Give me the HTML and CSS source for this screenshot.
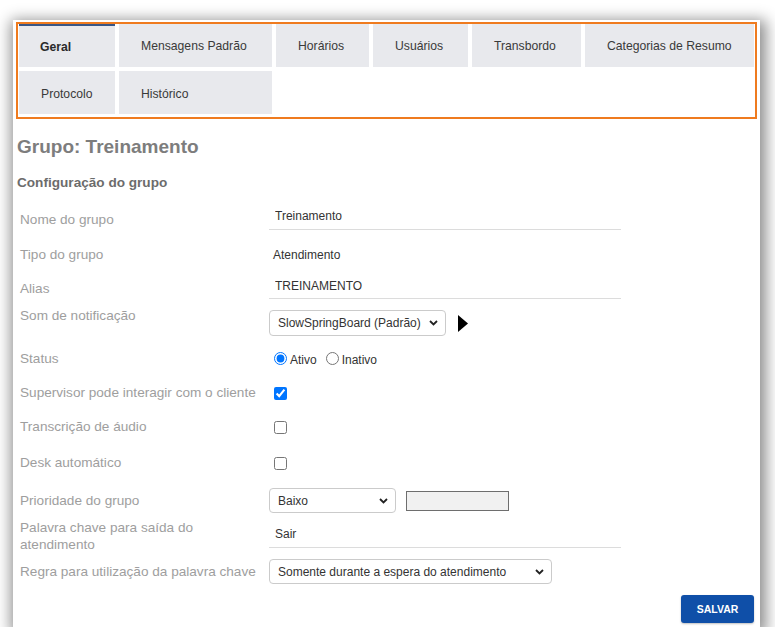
FILE: index.html
```html
<!DOCTYPE html>
<html lang="pt-BR">
<head>
<meta charset="utf-8">
<title>Grupo: Treinamento</title>
<link rel="stylesheet" href="styles.css">
</head>
<body>
<div class="card">
  <div class="tabs-frame">
    <div class="tabs">
      <div class="tab tab-active">Geral</div>
      <div class="tab">Mensagens Padrão</div>
      <div class="tab">Horários</div>
      <div class="tab">Usuários</div>
      <div class="tab">Transbordo</div>
      <div class="tab">Categorias de Resumo</div>
      <div class="tab tab-second">Protocolo</div>
      <div class="tab tab-second">Histórico</div>
    </div>
  </div>

  <div class="content">
    <h1 class="title">Grupo: Treinamento</h1>
    <h2 class="subtitle">Configuração do grupo</h2>

    <div class="form">
      <div class="label">Nome do grupo</div>
      <div class="field field-top field-first"><input class="text-input" type="text" value="Treinamento"></div>

      <div class="label">Tipo do grupo</div>
      <div class="field"><span class="static-value">Atendimento</span></div>

      <div class="label">Alias</div>
      <div class="field field-top"><input class="text-input text-input-short" type="text" value="TREINAMENTO"></div>

      <div class="label label-top">Som de notificação</div>
      <div class="field">
        <div class="select select-sound"><span>SlowSpringBoard (Padrão)</span>
          <svg class="chevron" width="9" height="6" viewBox="0 0 9 6"><path d="M1 1l3.5 3.5L8 1" fill="none" stroke="#222" stroke-width="1.8"/></svg>
        </div>
        <svg class="play" width="10" height="17" viewBox="0 0 10 17"><path d="M0 0L10 8.5L0 17Z" fill="#000"/></svg>
      </div>

      <div class="label">Status</div>
      <div class="field">
        <label class="radio"><input type="radio" name="status" checked><span class="radio-text">Ativo</span></label>
        <label class="radio"><input type="radio" name="status"><span class="radio-text">Inativo</span></label>
      </div>

      <div class="label">Supervisor pode interagir com o cliente</div>
      <div class="field"><input class="check" type="checkbox" checked></div>

      <div class="label">Transcrição de áudio</div>
      <div class="field"><input class="check" type="checkbox"></div>

      <div class="label">Desk automático</div>
      <div class="field"><input class="check" type="checkbox"></div>

      <div class="label">Prioridade do grupo</div>
      <div class="field">
        <div class="select select-priority"><span>Baixo</span>
          <svg class="chevron" width="9" height="6" viewBox="0 0 9 6"><path d="M1 1l3.5 3.5L8 1" fill="none" stroke="#222" stroke-width="1.8"/></svg>
        </div>
        <div class="priority-box"></div>
      </div>

      <div class="label label-wrap">Palavra chave para saída do atendimento</div>
      <div class="field field-top"><input class="text-input" type="text" value="Sair"></div>

      <div class="label">Regra para utilização da palavra chave</div>
      <div class="field">
        <div class="select select-rule"><span>Somente durante a espera do atendimento</span>
          <svg class="chevron" width="9" height="6" viewBox="0 0 9 6"><path d="M1 1l3.5 3.5L8 1" fill="none" stroke="#222" stroke-width="1.8"/></svg>
        </div>
      </div>
    </div>

    <div class="actions">
      <button class="btn-save" type="button">SALVAR</button>
    </div>
  </div>
</div>
</body>
</html>
```

FILE: styles.css
```css
* {
  box-sizing: border-box;
}

html, body {
  margin: 0;
  padding: 0;
  background: #ffffff;
}

body {
  font-family: "Liberation Sans", Arial, sans-serif;
  color: #333333;
}

.card {
  margin: 20px 0 0 13px;
  width: 747px;
  background: #ffffff;
  box-shadow: 2px 4px 14px 4px rgba(0, 0, 0, 0.45);
  padding: 2px 0 4px 0;
}

.tabs-frame {
  margin: 0 3px;
  border: 2px solid #ef7b1f;
  padding: 0 1px 3px 1px;
}

.tabs {
  display: grid;
  grid-template-columns: 96px 153px 93px 95px 109px 169px;
  grid-template-rows: 43px 43px;
  gap: 4px;
}

.tab {
  background: #e8e9ed;
  display: flex;
  align-items: center;
  padding-left: 22px;
  padding-top: 1px;
  font-size: 12.2px;
  color: #3a3a3a;
  white-space: nowrap;
}

.tab-second {
  padding-top: 3px;
}

.tab-active {
  border-top: 2px solid #3a5685;
  font-weight: bold;
  color: #2a2a2a;
  padding-left: 21px;
  padding-top: 0;
}

.content {
  padding: 0 6px 0 4px;
}

.title {
  margin: 17px 0 0 0;
  font-size: 19px;
  line-height: 22px;
  font-weight: bold;
  color: #7d7d7d;
}

.subtitle {
  margin: 17px 0 0 0;
  font-size: 13.6px;
  line-height: 16px;
  font-weight: bold;
  color: #6c6c6c;
}

.form {
  margin: 11px 0 0 3px;
  display: grid;
  grid-template-columns: 249px 1fr;
  grid-template-rows: 35px 35px 33px 36px 35px 34px 34px 38px 37px 34px 37px;
}

.label {
  align-self: center;
  font-size: 13.6px;
  line-height: 16px;
  color: #9e9e9e;
}

.label-top {
  align-self: start;
  margin-top: 3px;
}

.label-wrap {
  line-height: 17px;
}

.field {
  display: flex;
  align-items: center;
  font-size: 12px;
  color: #333333;
}

.field-top {
  align-items: flex-start;
  padding-top: 1px;
}

.field-first {
  padding-top: 0;
}

.text-input {
  width: 352px;
  height: 28px;
  border: none;
  border-bottom: 1px solid #dcdcdc;
  padding: 0 6px;
  margin: 0;
  font-family: "Liberation Sans", Arial, sans-serif;
  font-size: 12px;
  color: #333333;
  background: transparent;
  outline: none;
}

.text-input-short {
  height: 26px;
}

.static-value {
  padding-left: 4px;
}

.select {
  display: flex;
  align-items: center;
  justify-content: space-between;
  height: 26px;
  border: 1px solid #cbcbcb;
  border-radius: 4px;
  padding: 0 7px 0 8px;
  font-size: 12px;
  color: #333333;
  background: #ffffff;
  white-space: nowrap;
}

.select-sound {
  width: 177px;
}

.select-priority {
  width: 127px;
  height: 25px;
}

.select-rule {
  width: 283px;
  height: 25px;
}

.chevron {
  flex: none;
  display: block;
}

.play {
  display: block;
  margin-left: 12px;
}

.radio {
  display: flex;
  align-items: center;
  margin-right: 4px;
}

.radio input {
  margin: 0 3px 0 5px;
  width: 13px;
  height: 13px;
}

.radio-text {
  padding-top: 3px;
}

.check {
  margin: 0 0 0 5px;
  width: 13px;
  height: 13px;
}

.priority-box {
  margin-left: 10px;
  width: 103px;
  height: 20px;
  border: 1px solid #6e6e6e;
  background: #f1f1f1;
}

.actions {
  display: flex;
  justify-content: flex-end;
  margin-top: 5px;
}

.btn-save {
  width: 73px;
  height: 28px;
  border: none;
  border-radius: 3px;
  background: #0f4fa8;
  color: #ffffff;
  font-family: "Liberation Sans", Arial, sans-serif;
  font-size: 10.5px;
  font-weight: bold;
  box-shadow: 0 1px 2px rgba(0, 0, 0, 0.25);
  cursor: pointer;
}
```
